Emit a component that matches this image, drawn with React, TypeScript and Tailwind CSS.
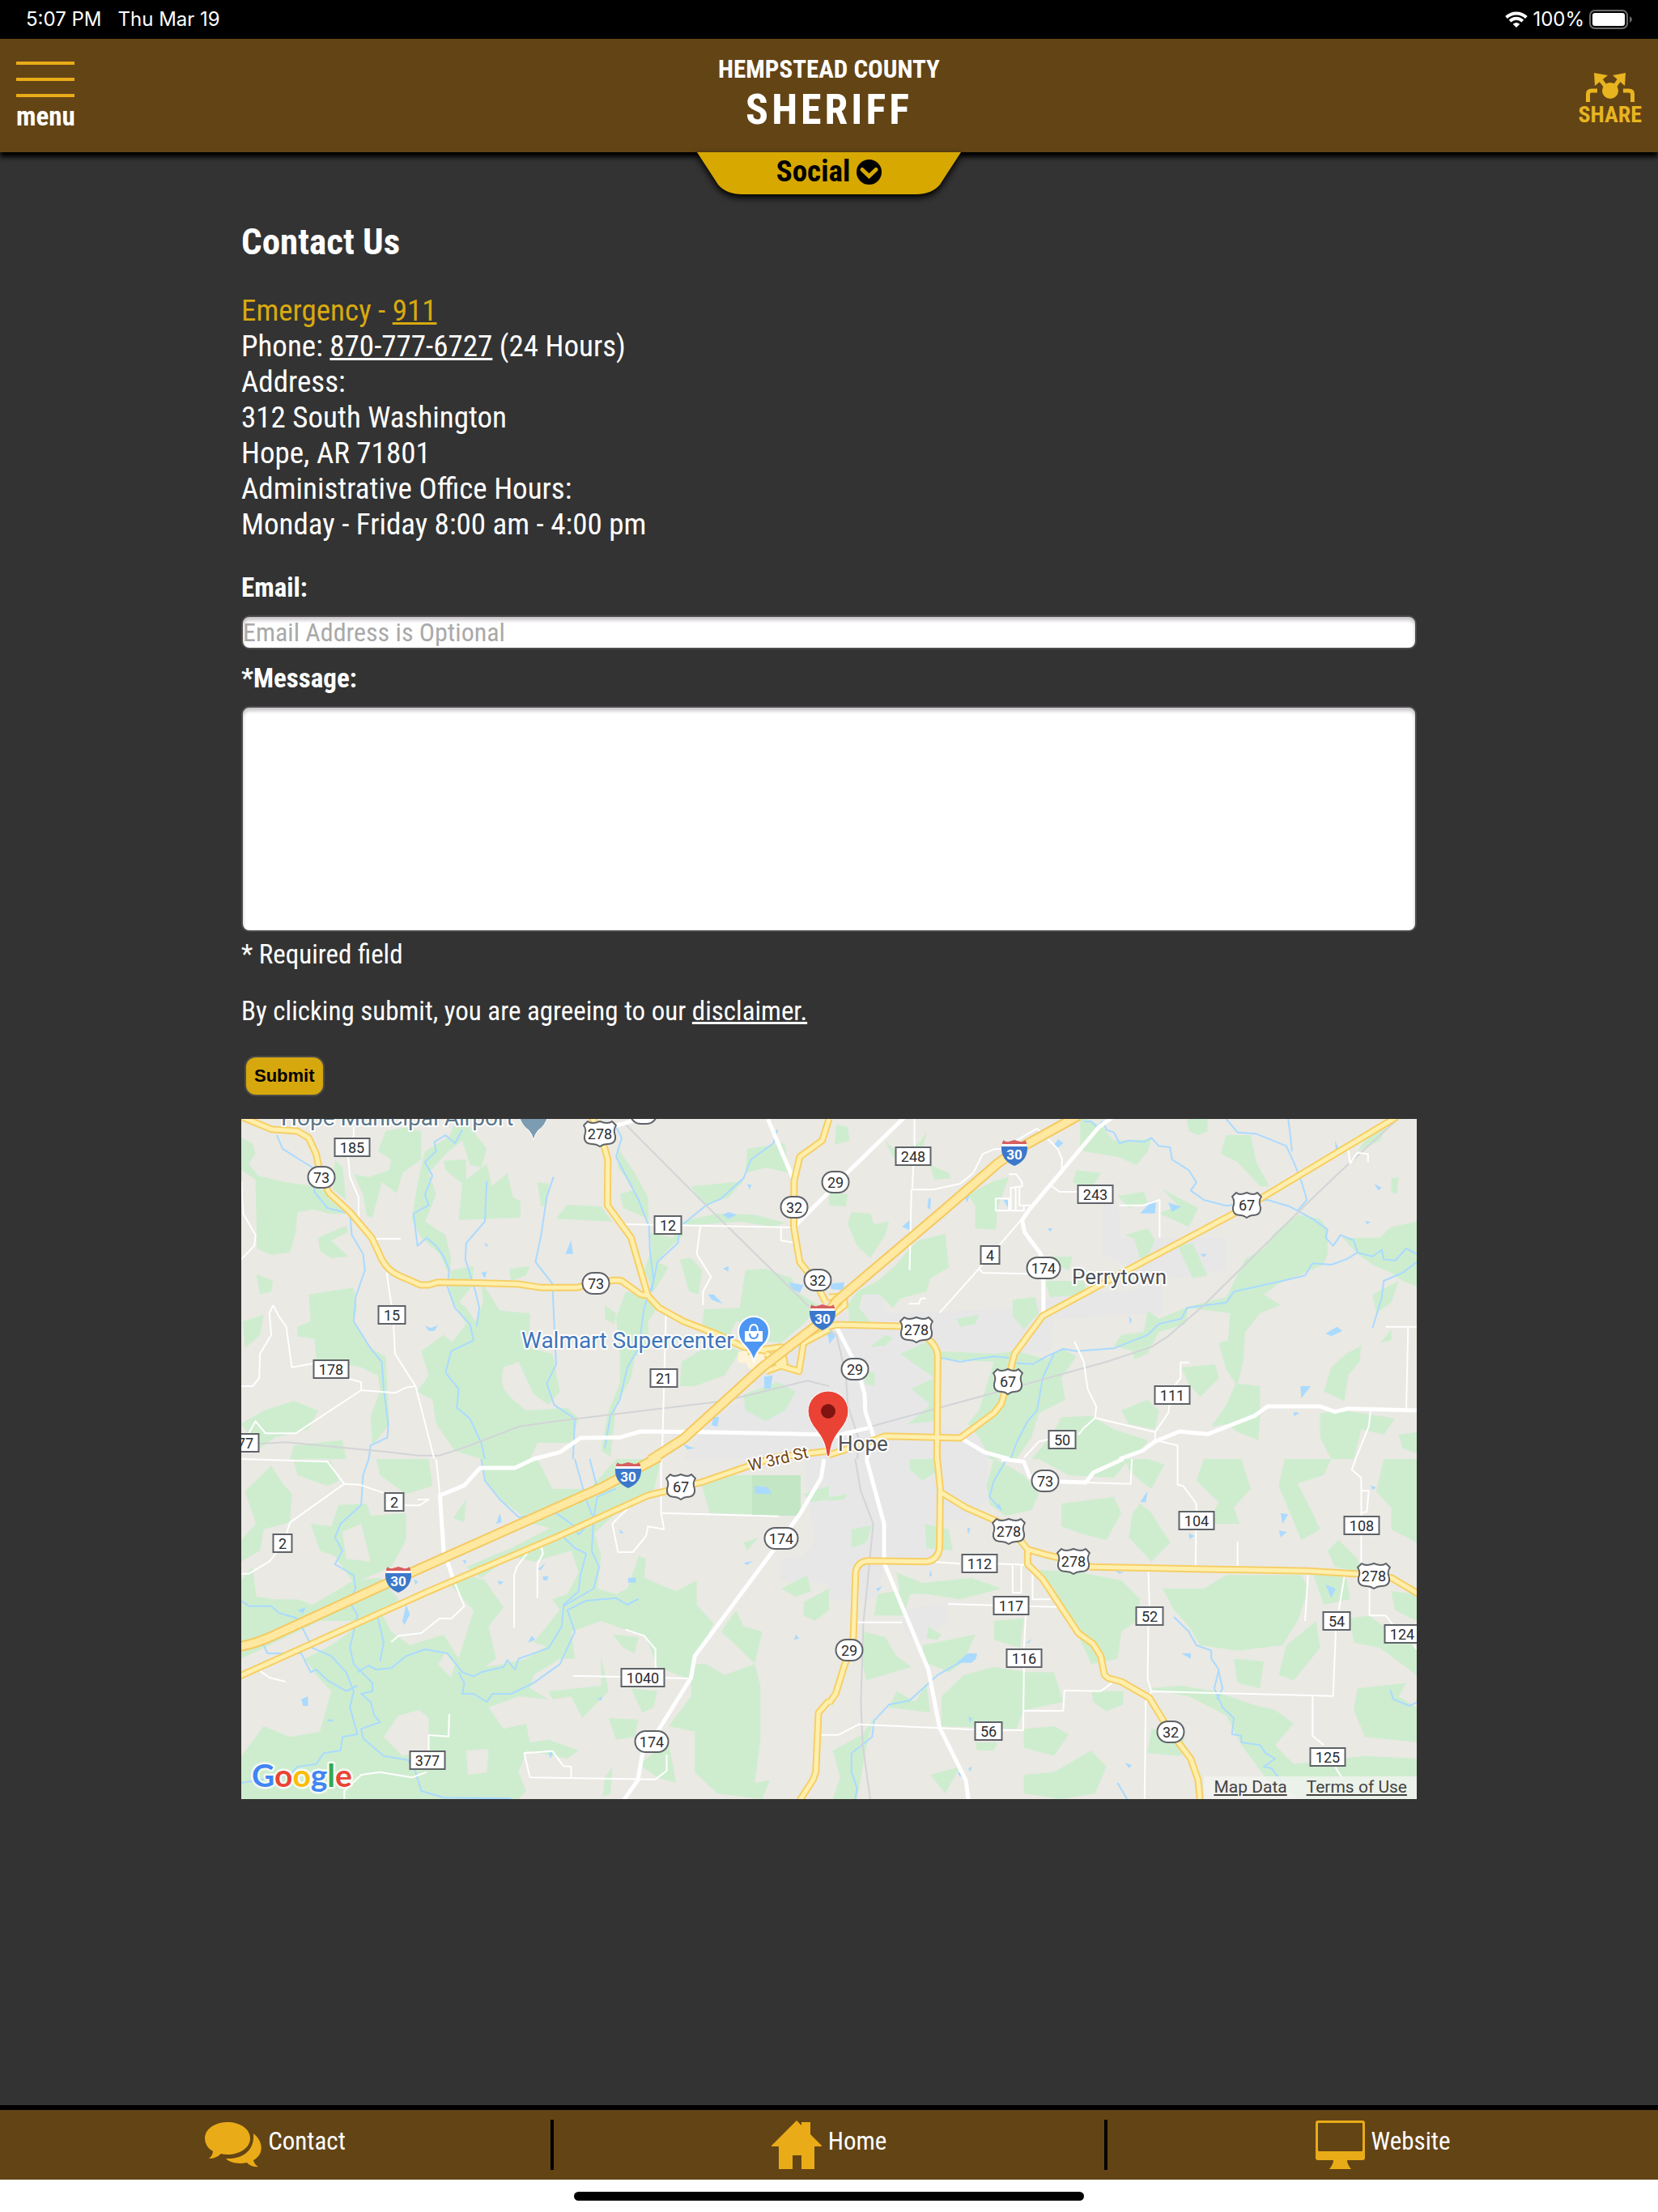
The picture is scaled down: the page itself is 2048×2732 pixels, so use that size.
/**
 * Contact screen of the county sheriff app
 */

import React, { useState } from 'react';

/* ------------------------------------------------------------------ */
/* Map data                                                            */
/* ------------------------------------------------------------------ */

interface Tile {
  transform: string;
  city: string[];
  woods: string[];
  water: string[];
  rivers: string;
  rail: string;
  lanes: string;
  streets: string;
  highways: string;
  interstate: string;
}

// The map is made of four tiles, each one drawn on a 1568 x 1260 grid
const TILES: Tile[] = [
  {
    transform: 'translate(0 0) scale(0.463 0.33333)',
    city: ['M1330 880 L1500 830 L1568 760 V1260 L1180 1260 L1250 1120 L1380 1000Z'],
    woods: [
      'M0 70 L30 90 L38 130 L20 165 L45 210 L120 235 L200 250 L250 290 L290 350 L235 352 L195 335 L150 345 L145 420 L130 495 L80 503 L42 480 L38 225 L0 190Z',
      'M365 120 L385 45 L440 30 L480 45 L480 150 L430 200 L415 275 L375 235 L350 365 L335 360 L325 280 L300 205 L340 215 L395 190 L400 150Z',
      'M575 0 L605 20 L655 110 L640 180 L610 170 L590 80 L545 130 L500 200 L520 280 L490 380 L545 430 L560 520 L555 580 L530 500 L480 440 L455 370 L470 240 L490 120 L555 65Z',
      'M540 155 L600 150 L600 225 L655 165 L668 250 L710 200 L725 290 L745 305 L745 365 L660 370 L580 375 L590 240 L545 190Z',
      'M790 235 L820 240 L815 320 L800 325Z',
      'M840 370 L870 318 L960 325 L990 380Z',
      'M1005 110 L1050 200 L1085 290 L1088 420 L1150 440 L1165 400 L1180 430 L1140 480 L1110 530 L1140 550 L1100 640 L1075 560 L1095 480 L1085 370 L1020 330 L1010 280 L1050 260 L1005 180Z',
      'M1200 250 L1340 230 L1300 290 L1235 320Z',
      'M1175 380 L1270 350 L1370 355 L1450 385 L1420 400 L1330 380 L1190 395Z',
      'M1350 110 L1450 90 L1460 200 L1400 180 L1345 200Z',
      'M180 650 L300 625 L310 700 L300 750 L345 850 L385 880 L390 1000 L395 1130 L350 1210 L345 1100 L370 1010 L365 950 L320 920 L200 890 L195 815 L150 805 L150 770 L185 750Z',
      'M550 640 L600 700 L625 750 L645 680 L640 600 L690 710 L770 720 L770 850 L830 870 L850 1010 L820 1060 L780 1020 L740 900 L700 920 L690 1000 L760 1080 L870 1070 L900 1110 L880 1200 L790 1200 L770 1260 L640 1260 L600 1120 L545 1140 L505 1020 L540 920 L560 830 L600 760Z',
      'M480 860 L540 800 L600 870 L545 950 L570 1040 L640 1190 L640 1260 L570 1230 L520 1130 L510 1040 L470 1010 L500 950Z',
      'M590 880 L680 860 L700 1000 L760 1100 L640 1180 L580 1060Z',
      'M1025 640 L1090 660 L1110 700 L1085 750 L1090 850 L1050 880 L1040 960 L1000 1060 L985 1250 L960 1230 L980 1080 L1010 980 L1010 870 L1000 740Z',
      'M1235 705 L1330 700 L1345 560 L1400 555 L1470 590 L1480 640 L1540 690 L1500 760 L1440 830 L1380 820 L1370 760 L1320 750 L1300 810 L1230 760Z',
      'M1170 990 L1175 900 L1270 820 L1330 860 L1290 950 L1210 990Z',
      'M1340 1020 L1430 975 L1480 1010 L1450 1080 L1400 1120 L1345 1080Z',
      'M40 575 L85 600 L80 640 L50 650Z',
      'M5 750 L60 725 L50 800 L10 850Z',
      'M205 440 L280 395 L285 420 L240 450 L285 510 L240 515 L210 490Z',
      'M60 1080 L140 1045 L205 1080 L180 1150 L90 1180 L50 1220 L0 1130Z',
      'M970 690 L1000 720 L995 760 L970 740Z',
      'M1170 520 L1200 515 L1230 560 L1220 650 L1195 640Z',
      'M140 1210 L270 1190 L280 1260 L130 1260Z',
      'M560 560 L620 545 L615 620 L580 680 L555 640Z',
      'M715 555 L770 545 L760 580 L720 600Z',
      'M250 150 L270 180 L280 300 L245 260Z',
    ],
    water: [
      'M1285 355 L1300 345 L1322 355 L1300 370Z',
      'M1460 605 L1500 615 L1490 645 L1470 630Z',
      'M490 765 L505 775 L525 765 L515 785 L500 785Z',
      'M865 500 L880 450 L885 500Z',
      'M1180 1205 L1210 1220 L1190 1225Z',
      'M1245 650 L1260 650 L1285 685 L1255 670Z',
      'M1395 955 L1418 950 L1412 1000 L1395 1000Z',
      'M640 570 L655 565 L650 590Z',
      'M1260 1105 L1275 1105 L1270 1140 L1255 1135Z',
      'M1285 555 L1300 545 L1300 565Z',
      'M1560 780 L1568 780 L1568 820Z',
      'M648 460 L658 465 L655 475Z',
      'M1350 240 L1362 245 L1355 262Z',
    ],
    rivers:
      'M95 60 L110 110 L155 150 L190 180 L195 270 L230 330 L290 350 L295 430 L325 500 L330 560 L305 660 L300 750 L345 850 L375 900 L380 1000 L392 1130 L390 1180 L345 1210 L340 1260 M590 40 L570 90 L545 60 L515 85 L520 120 L490 160 L510 210 L490 280 L500 320 L460 350 L470 470 L495 440 L520 470 L540 510 L555 560 L550 620 L570 700 L610 760 L620 820 L560 860 L545 940 L580 1000 L575 1070 L610 1110 L640 1200 L650 1260 M655 230 L650 380 L600 460 L598 520 L625 640 L635 700 L628 770 M833 215 L815 290 L800 430 L785 530 L830 610 L835 760 L840 910 L815 980 L835 1060 L890 1110 L885 1260 M1000 30 L1015 70 L1000 140 L1060 300 L1088 400 L1090 480 L1100 600 L1075 700 L1060 850 L1030 920 L1010 1040 L985 1100 L970 1220 M1430 40 L1420 90 L1360 150 L1340 220 L1280 295 L1240 320 L1170 400 L1165 460 L1110 530 L1095 640',
    rail: 'M1025 20 L1240 320 L1515 695 M0 1207 L120 1198 L250 1215 L400 1235 L470 1247 H530 L600 1215 L740 1140 L840 1120 L1290 1045 L1510 970 L1568 990',
    lanes:
      'M300 30 V60 L285 140 L290 215 L313 290 V380 M360 444 H425 M388 570 L395 640 L405 720 L410 870 L465 990 L515 1260 M465 990 L440 995 L410 1015 L320 1005 L145 1165 H65 L38 1120 L20 1165 M85 690 L75 720 L80 800 L50 870 L48 960 L30 990 L0 990 M85 690 L100 730 L120 770 L135 920 L195 905 M280 960 L320 975 L320 1005 M1020 390 L1475 402 M1225 397 L1215 500 L1253 585 L1232 640 V690 M1133 730 L1123 1230 M1440 402 L1440 450 L1475 458 M0 230 L5 350 L38 430 L35 470 L0 520',
    streets:
      'M780 1260 L850 1235 L905 1182 L1010 1180 L1065 1158 L1240 1160 L1568 1170 M1405 0 L1475 230 M1568 270 L1478 395 M1000 25 L1060 0',
    highways:
      'M0 -8 L80 38 L150 45 L180 70 L200 130 L212 215 L235 275 L290 345 L348 440 L375 520 Q390 560 420 580 L478 615 L500 615 L525 605 L610 607 L740 612 L800 625 L895 625 L940 608 L1000 597 L1015 600 L1065 650 L1085 655 M935 -10 L962 70 L978 150 L977 320 L1040 440 L1085 655 L1115 700 L1180 750 L1265 795 L1340 845 L1400 860 M1568 0 L1550 80 L1490 140 L1475 230 L1474 400 L1490 530 L1530 600 L1560 680 M1350 862 L1440 845 L1450 905 L1400 870 M1400 935 L1440 915 L1488 935 L1500 830 L1568 780 M1400 870 L1440 915',
    interstate: 'M1090 1265 L1180 1185 L1390 920 L1568 730',
  },
  {
    transform: 'translate(726 0) scale(0.463 0.33333)',
    city: [
      'M0 720 L160 720 L340 710 L500 700 L640 640 L780 640 L890 610 L890 720 L600 740 L590 860 L430 880 L290 850 L290 1130 L440 1190 L440 1260 L0 1260Z',
      'M730 300 L770 300 L780 440 L1060 440 L1060 560 L880 600 L730 500Z',
      'M90 650 L140 640 L150 720 L90 720Z',
    ],
    woods: [
      'M20 20 L50 30 L55 80 L15 95Z',
      'M0 270 L50 280 L45 325 L0 320Z',
      'M60 345 L110 350 L120 390 L160 380 L150 430 L110 515 L75 470 L50 390Z',
      'M240 450 L310 425 L320 550 L270 590 L260 640 L190 665 L170 700 L135 650 L90 650 L80 700 L110 750 L55 760 L50 690 L75 640 L130 600 L180 540 L215 480Z',
      'M370 280 L440 230 L480 215 L450 330 L445 410 L390 405 L390 320Z',
      'M270 170 L320 200 L325 220 L280 225Z',
      'M150 80 L180 120 L240 90 L260 50 L250 110 L200 150 L170 140Z',
      'M670 0 L690 0 L730 30 L760 80 L860 75 L850 120 L820 170 L770 140 L680 120 L670 100Z',
      'M660 190 L725 200 L700 260 L650 235Z',
      'M770 285 L840 270 L850 310 L800 330Z',
      'M890 260 L985 330 L960 400 L880 350 L930 320Z',
      'M790 430 L850 405 L870 450 L850 510 L830 520 L815 445Z',
      'M930 470 L970 460 L1010 580 L970 590Z',
      'M955 0 L1010 0 L1010 45 L985 60 L960 45Z',
      'M1060 60 L1125 60 L1140 160 L1175 250 L1150 250 L1090 160 L1045 130Z',
      'M1440 60 L1490 20 L1470 80 L1410 120Z',
      'M1110 520 L1160 480 L1190 420 L1250 355 L1310 370 L1330 410 L1330 500 L1320 540 L1200 610 L1160 650 L1205 690 L1150 720 L1110 790 L1105 900 L1090 980 L1150 990 L1150 1100 L1145 1190 L1090 1160 L1060 1130 L1020 1140 L1060 1060 L1085 980 L1060 930 L1040 830 L1065 820 L1070 720 L960 700 L950 760 L880 790 L850 870 L815 890 L810 860 L760 840 L780 800 L840 790 L850 710 L880 740 L960 695 L1060 660Z',
      'M1370 440 L1470 440 L1500 400 L1568 380 L1568 620 L1530 600 L1500 570 L1450 540 L1410 500Z',
      'M1450 650 L1520 600 L1500 680 L1460 720Z',
      'M1380 870 L1420 840 L1415 900 L1385 950 L1375 1045 L1320 1010 L1340 920Z',
      'M1310 1090 L1370 1080 L1420 1090 L1510 1110 L1480 1170 L1420 1150 L1400 1260 L1340 1260 L1310 1180Z',
      'M490 670 L550 660 L560 720 L520 780 L490 730Z',
      'M590 510 L650 510 L640 560 L590 530Z',
      'M575 600 L680 600 L690 650 L590 660Z',
      'M340 740 L400 725 L390 760 L350 770Z',
      'M190 870 L270 820 L290 860 L440 870 L500 860 L580 890 L620 850 L660 880 L620 960 L630 1040 L560 1090 L540 1180 L500 1260 L430 1260 L400 1180 L370 1130 L400 1080 L440 900 L300 890 L290 1120 L210 1130 L270 1060 L220 1000 L280 960Z',
      'M620 1105 L700 1100 L760 1150 L850 1190 L830 1240 L770 1260 L540 1260 L590 1180Z',
      'M780 1080 L850 1040 L880 1080 L870 1150 L800 1130Z',
      'M940 920 L1030 910 L1040 960 L990 1030 L960 980Z',
      'M1470 830 L1500 780 L1500 820Z',
      'M1500 220 L1520 215 L1515 280 L1500 270Z',
      'M95 935 L122 940 L122 990 L95 980Z',
      'M110 845 L150 800 L170 810 L150 840Z',
      'M1520 1170 L1568 1160 V1240 L1530 1220Z',
    ],
    water: [
      'M830 350 L860 305 L872 310 L870 350Z',
      'M905 310 L940 325 L915 345Z',
      'M195 400 L215 375 L215 412Z',
      'M600 95 L612 75 L625 90 L610 108Z',
      'M5 610 L40 605 L40 635 L5 630Z',
      'M1325 795 L1355 770 L1370 785 L1340 805Z',
      'M1258 990 L1285 990 L1260 1035Z',
      'M360 280 L375 285 L368 310Z',
      'M265 295 L272 295 L270 335 L263 330Z',
      'M990 500 L1008 500 L1000 512Z',
      'M1455 240 L1475 255 L1465 265Z',
      'M1240 1085 L1255 1090 L1240 1102Z',
      'M0 780 L18 805 L0 835Z',
      'M800 730 L808 745 L803 760Z',
      'M583 405 L597 405 L590 418Z',
      'M465 300 L480 300 L478 330Z',
      'M1350 80 L1360 110 L1352 115Z',
      'M1430 378 L1445 382 L1435 390Z',
    ],
    rivers:
      'M680 10 L700 10 L715 30 L730 10 L740 40 L760 50 L775 90 L800 80 L840 85 L860 70 L880 100 L910 105 L915 150 L960 190 L980 235 L965 265 L1000 300 L1060 322 L1170 300 L1230 325 L1290 370 L1330 410 L1325 440 L1345 470 L1365 430 L1400 450 L1410 495 L1450 510 L1475 485 L1480 520 L1510 525 L1540 480 L1568 500 M1410 495 L1380 520 L1340 540 L1290 535 L1270 580 L1210 600 L1080 640 L1060 680 L955 700 L940 740 L880 760 L850 800 L760 850 L660 860 L625 852 L580 880 L545 908 L500 905 M480 885 L440 880 L390 890 L350 900 L300 885 M600 870 L570 960 L555 1080 L530 1120 L500 1200 L485 1260 M1060 0 L1090 50 L1140 55 L1220 100 L1240 160 L1260 230 L1275 300 L1250 340 M1225 0 L1230 50 L1235 120 M1568 530 L1530 570 L1480 600 L1475 660 L1450 775',
    rail: 'M1510 10 L1360 200 L1270 320 L1000 690 L905 805 L860 845 L740 900 L480 1000 L110 1140 L40 1165 M0 780 L20 800 L45 950 L50 1060 L80 1190 L75 1260',
    lanes:
      'M228 0 V100 L222 262 H278 L350 240 L385 200 L410 130 L440 112 H470 M500 80 L555 35 L610 110 L622 150 L620 200 L590 245 L615 270 H665 M220 262 L215 560 M515 370 L400 555 L295 718 M400 555 L410 570 L575 575 M655 825 L680 900 L690 1000 L713 1065 L710 1108 L870 1160 L905 1090 L912 1030 M915 1000 L938 960 V902 H960 M870 1160 V1190 L930 1210 V1260 M710 1108 L680 1145 L665 1170 M585 1188 L560 1195 L520 1255 M775 320 H840 L882 300 V440 M1385 110 L1390 165 L1410 125 L1438 130 V160 M1485 770 H1568 M1545 775 L1540 1075 M1445 1080 L1440 1140 L1405 1260 M445 295 H480 V340 H445Z M480 205 H500 L515 235 V250 L485 255 V340 H520 V320 M498 255 V340 M508 255 V320 H540 M213 685 H240 L245 665 H258',
    streets:
      'M200 -5 L0 265 M755 -5 L720 30 L535 335 L515 375 L522 420 L565 500 L572 550 L572 720 M20 770 L75 920 L95 1020 L97 1085 L120 1180 M0 1180 L105 1145 M100 1260 L120 1180 M355 1185 L415 1235 L480 1260 M775 1260 L835 1230 L870 1195 L935 1158 L1010 1168 L1135 1100 L1170 1065 H1310 L1350 1085 L1385 1073 L1568 1080',
    highways:
      'M1515 -8 L1115 325 L790 565 L570 730 L495 870 L477 970 L460 1055 L440 1090 L350 1182 L150 1175 L100 1200 L0 1245 M0 770 L20 762 L190 768 L235 785 Q290 830 290 880 L288 1265 M0 660 L40 658 L42 690 L10 725',
    interstate: 'M665 -12 L500 115 L450 165 L300 345 L20 675 L-10 735',
  },
  {
    transform: 'translate(0 420) scale(0.463 0.33333)',
    city: ['M1500 0 H1568 V460 L1440 450 V370 L1500 360 L1530 300Z'],
    woods: [
      'M0 300 L40 240 L10 120 L80 25 L110 90 L135 130 L130 235 L60 260 L50 340 L0 380Z',
      'M260 170 L335 165 L345 210 L440 200 L440 300 L400 400 L300 460 L250 360 L210 340 L185 240 L240 250Z M270 270 L320 240 L345 380 L280 370Z',
      'M0 450 L30 400 L40 510 L90 520 L150 520 L190 540 L300 450 L370 440 L420 520 L350 600 L210 600 L150 640 L60 700 L0 740Z',
      'M360 0 L500 0 L510 100 L440 130 L400 90 L370 60Z',
      'M640 0 L790 0 L830 110 L930 110 L1000 0 L1120 0 L1100 120 L1000 200 L900 330 L870 340 L860 270 L780 240 L700 160 L650 80Z',
      'M640 440 L600 400 L720 330 L860 230 L940 260 L960 360 L950 480 L1000 500 L1030 480 L1060 360 L1080 370 L1075 440 L1160 490 L1215 450 L1215 540 L1260 610 L1210 740 L1200 820 L1110 770 L1080 660 L960 600 L880 640 L830 700 L780 680 L860 540 L850 560 L830 520 L870 500 L900 420 L880 340 L780 380 L720 360Z',
      'M590 420 L650 450 L700 550 L660 620 L680 740 L640 780 L580 740 L620 560 L560 470Z',
      'M170 740 L240 690 L290 640 L370 560 L400 640 L450 690 L540 650 L580 740 L650 770 L700 760 L760 740 L830 680 L880 640 L890 740 L850 740 L780 800 L770 850 L820 890 L740 880 L660 920 L700 1000 L760 980 L770 1050 L820 1040 L900 1080 L870 1110 L760 1080 L740 1160 L760 1230 L740 1260 L0 1260 L0 1100 L60 990 L130 1030 L210 1010 L240 860 L200 800Z M380 1030 L420 950 L475 930 L500 960 L500 1080 L430 1100Z M600 1080 L660 1075 L655 1160 L605 1170Z M525 760 L545 720 L570 760 L560 810Z',
      'M1200 760 L1240 760 L1290 800 L1370 760 L1385 840 L1385 1040 L1370 1200 L1410 1190 L1390 1260 L1270 1240 L1210 1160 L1210 1010 L1140 990 L1200 880Z',
      'M1225 80 L1300 60 L1490 60 L1490 210 L1250 200Z',
      'M1040 850 L1110 860 L1100 920 L1070 940Z',
      'M980 960 L1060 965 L1050 1030 L1000 1040Z',
      'M1440 480 L1510 430 L1520 490 L1480 510Z',
      'M1500 530 L1568 480 L1568 560 L1530 600 L1500 580Z',
      'M820 860 L960 840 L960 730 L980 860 L910 960 L880 880 L830 890Z',
      'M1280 640 L1320 560 L1340 620 L1390 640 L1370 760 L1320 690Z',
      'M1060 1130 L1140 1050 L1160 1200 L1110 1180Z',
      'M565 220 L600 150 L595 235Z',
      'M140 0 L240 10 L260 80 L230 100 L150 60Z',
      'M1500 130 L1568 100 L1568 150 L1520 160Z',
      'M990 650 L1060 660 L1050 720 L1020 700Z',
      'M1340 310 L1380 290 L1350 340Z',
      'M970 1180 L990 1140 L985 1240 L965 1250Z',
    ],
    water: [
      'M430 600 L440 540 L450 575 L435 615Z',
      'M680 240 L690 200 L695 235Z',
      'M1370 100 L1405 105 L1415 130 L1370 128Z',
      'M1032 440 H1053 V458 H1032Z',
      'M160 890 L178 880 L178 915 L165 915Z',
      'M150 560 L172 550 L165 572Z',
      'M790 410 L812 385 L800 410Z',
      'M805 435 L820 435 L815 450 L805 448Z',
      'M1340 385 L1365 378 L1350 392Z',
      'M1475 670 L1480 650 L1488 665Z',
      'M685 450 L700 455 L688 467Z',
      'M460 445 L472 455 L465 465Z',
      'M230 965 H246 V972 H230Z',
      'M765 680 L775 655 L785 670Z',
      'M590 375 L600 375 L598 390Z',
      'M820 1090 L832 1085 L825 1110Z',
      'M950 890 L965 880 L960 895Z',
      'M1010 260 L1020 275 L1010 275Z',
    ],
    rivers:
      'M340 0 L325 60 L320 170 L265 240 L250 290 L270 340 L250 390 L300 430 L305 480 L290 530 L310 580 L290 700 L300 760 L350 830 L350 860 L320 870 L345 900 L355 950 L370 975 L320 1000 L325 1035 L380 1100 L445 1115 L465 1160 L480 1230 L540 1255 L720 1258 M0 525 L20 545 L80 545 L100 570 L150 590 L190 700 L240 730 L280 790 L300 860 L290 920 L310 1020 L270 1030 L265 1080 L220 1090 L200 1130 L150 1140 L130 1170 L0 1200 M60 690 L70 720 L160 720 L185 790 L200 780 L230 820 L280 860 L310 840 M365 590 L380 680 L370 750 M310 790 L340 765 L360 780 L400 775 L440 730 L490 705 L550 720 L590 790 L620 805 L640 790 L700 770 L710 745 L730 780 L740 740 L820 700 L855 620 L860 540 L900 490 L905 430 L920 350 L890 330 L860 290 M580 790 L595 830 L590 870 L620 870 L655 900 L670 870 L720 870 L780 830 L850 760 L890 640 L870 560 L920 525 L1000 515 L1030 540 L1060 518 M640 0 L650 80 L690 150 L740 215 L840 200 L890 250 L900 280 L940 220 L950 140 L1000 110 M930 0 L950 110 M890 0 L920 150 L940 220 L935 340 L955 400 L940 480 L860 545',
    rail: '',
    lanes:
      'M0 0 L230 10 L275 92 L130 235 L120 280 M275 92 L315 95 L400 135 M530 135 L520 0 M95 345 L75 380 L20 425 H0 M435 172 H475 L500 150 L470 150 M567 450 L595 545 L560 592 L530 590 L480 645 L420 655 L400 678 M800 320 L805 350 L790 390 V515 M765 345 L735 400 L728 430 V625 M1120 0 V200 L1435 212 M1120 200 L1128 260 L1085 250 L1080 285 L1045 345 H1005 L990 240 L1030 185 M885 803 L1195 813 M1105 775 V705 L1075 655 L1025 632 M500 1080 V1023 L553 1028 L555 945 M275 1260 V1230 L320 1170 L370 1160 L455 1180 L495 1160 M770 1180 L1105 1187 L1135 1155 V1095 M770 1180 L755 1090 L830 1082 L860 1138 L880 1140 V1180 M1533 1022 H1568 M50 785 L75 810 L118 825',
    streets:
      'M780 0 L730 33 H637 L595 98 L530 135 L540 340 L567 450 M1555 0 L1547 70 L1490 205 L1440 300 L1210 730 L1200 810 L1115 1000 L1070 1095 L1058 1190 L1020 1265',
    highways:
      'M-5 805 L500 490 L840 290 L1085 135 L1130 120 L1230 85 L1345 30 L1420 -5 L1568 -30 M1568 895 L1540 940 L1533 1160 L1525 1190 L1490 1265',
    interstate: 'M-5 695 Q40 685 100 645 L390 460 L640 305 L970 100 L1115 -8',
  },
  {
    transform: 'translate(726 420) scale(0.463 0.33333)',
    city: [
      'M0 0 H420 L430 140 L360 230 L300 220 V370 L150 380 L130 520 H0Z',
      'M200 560 L315 530 V600 L240 680 L200 640Z',
    ],
    woods: [
      'M215 0 L280 0 L285 50 L250 80 L215 40Z',
      'M440 0 L470 20 L520 60 L560 130 L540 190 L470 210 L430 170 L420 100Z',
      'M560 0 L800 0 L760 70 L640 60Z',
      'M620 165 L760 140 L780 200 L740 300 L680 280 L620 250Z',
      'M790 0 L850 0 L895 20 L860 110 L830 80 L800 40Z',
      'M830 165 L860 200 L910 310 L860 380 L800 290 L810 200Z',
      'M1000 0 L1100 0 L1125 110 L1080 180 L1095 240 L1010 240 L1040 160 L980 80Z',
      'M1215 0 L1340 0 L1320 60 L1250 90 L1290 200 L1310 260 L1260 300 L1200 100Z',
      'M1480 0 H1568 V310 L1500 260 L1500 180 L1460 120Z',
      'M1360 300 L1410 370 L1420 420 L1350 400 L1330 340Z',
      'M560 410 L670 420 L780 450 L830 520 L820 600 L780 640 L770 740 L700 760 L660 640 L600 480Z',
      'M890 480 L1000 480 L1060 430 L1260 430 L1280 480 L1250 600 L1210 690 L1090 710 L990 690 L960 620 L920 560Z',
      'M1290 420 L1380 440 L1390 520 L1320 540Z',
      'M1220 690 L1300 600 L1310 700 L1240 820 L1200 800Z',
      'M1500 490 L1568 500 V600 L1510 560Z',
      'M1390 590 L1440 580 L1500 640 L1568 700 V800 L1470 700 L1400 680Z',
      'M250 690 L390 650 L360 750 L320 790 L250 750Z',
      'M95 640 L150 660 L180 730 L220 770 L100 820 L85 740Z',
      'M300 880 L360 800 L440 770 L530 790 L600 790 L625 900 L520 930 L500 1000 L300 990Z',
      'M180 860 L230 900 L260 830 L270 940 L160 920Z',
      'M10 1080 L90 1020 L120 960 L100 1060 L75 1260 L10 1260 L30 1180Z',
      'M520 1000 L600 990 L640 1020 L600 1100 L520 1070Z',
      'M520 1170 L600 1160 L700 1080 L740 1140 L710 1240 L620 1260 L520 1240Z',
      'M850 850 L940 840 L1030 860 L1130 910 L1190 930 L1240 980 L1190 1060 L1240 1130 L1430 1100 L1568 1110 V1260 L1260 1260 L1170 1190 L1100 1060 L1060 950 L960 880Z',
      'M1410 850 L1540 830 L1520 880 L1568 920 V1050 L1430 1030 L1400 930Z',
      'M860 1000 L950 1020 L940 1100 L850 1090Z',
      'M180 420 L250 460 L380 440 L460 480 L350 520 L260 500 L190 500Z',
      'M440 600 L520 590 L510 700 L440 670Z',
      'M700 860 H785 V910 L740 935 L705 900Z',
      'M1080 740 L1160 750 L1150 850 L1090 830Z',
      'M255 240 L320 260 L330 340 L260 330Z',
      'M130 500 L220 480 L200 580 L120 580Z',
      'M390 1050 L450 1050 L440 1080 L395 1080Z',
      'M270 1170 L350 1140 L310 1240Z',
      'M0 140 L50 130 L40 150 L0 155Z',
      'M60 260 L115 245 L100 310 L60 330Z',
      'M265 620 L300 650 L290 670 L260 665Z',
    ],
    water: [
      'M340 755 L370 720 L395 720 L392 740 L380 755Z',
      'M445 180 L455 165 L460 185Z',
      'M830 160 L850 118 L845 160Z',
      'M1325 465 L1352 480 L1340 515Z',
      'M1205 200 L1225 205 L1210 240Z',
      'M940 720 L965 720 L965 740Z',
      'M790 1125 L808 1135 L800 1145Z',
      'M1200 265 L1222 270 L1205 290Z',
      'M525 685 L540 665 L535 680Z',
      'M960 275 L975 285 L962 297Z',
      'M1445 98 L1460 105 L1450 115Z',
      'M760 410 L785 420 L775 425Z',
      'M370 255 L376 255 L374 275 L369 270Z',
      'M270 410 L275 430 L268 438Z',
      'M125 480 L142 472 L132 490Z',
      'M372 955 L382 960 L376 980Z',
      'M372 1145 L382 1140 L376 1160Z',
      'M342 1160 L355 1165 L350 1180Z',
    ],
    rivers:
      'M470 10 L440 80 L428 140 L460 190 M380 730 L290 800 L215 895 L160 910 L120 970 L115 1030 L60 1090 L60 1160 L75 1220 L70 1260 M920 585 L960 640 L980 690 L1020 710 L1020 740 L1040 780 L1028 850 L1050 920 L1080 960 L1075 1020 L1100 1025 L1100 1050 L1150 1060 L1165 1090 L1190 1110 L1160 1140 L1180 1145 L1210 1200 M1498 855 L1505 890 L1550 915 L1568 900 M1040 790 L1050 850 L1035 890 M770 1200 L795 1260',
    rail: 'M70 0 L85 120 L118 240 L100 500 L92 600 L85 900 L90 1060 L110 1260',
    lanes:
      'M685 87 L805 92 L808 0 M930 0 V95 L945 100 L980 165 L978 395 M1090 307 V400 M1405 0 L1395 40 L1420 70 V400 M1420 118 H1440 L1435 195 L1420 200 M285 382 L350 388 M445 388 L530 392 M490 392 V495 H513 V392 M318 537 L440 542 M530 545 L610 548 M543 400 V520 H590 M525 580 L520 700 M520 775 L518 1005 H460 M0 1022 H25 L80 983 L390 1003 M520 933 H625 L628 857 L725 860 L755 830 M852 415 L855 545 M852 615 L850 815 L860 862 H885 L1345 878 L1352 635 M1360 560 L1375 435 M1278 430 L1270 600 M1290 878 V1025 L1320 1060 M1350 1140 L1370 1185 M860 862 L845 900 L842 1260 M1442 480 V580 H1485 L1505 615 M1560 690 L1568 705 M75 605 H195',
    streets:
      'M100 0 L147 240 V385 L265 780 L295 995 L365 1190 L372 1265 M460 0 L520 10 L535 65 L575 82 L685 87 L705 50 L785 0',
    highways:
      'M288 -10 L297 110 L295 330 Q290 375 260 380 L105 377 Q75 380 71 420 L65 660 L55 710 L40 770 L18 870 L0 905 M300 125 L365 180 L480 250 L530 335 L580 355 L652 378 L700 400 L1280 415 L1455 430 L1500 440 L1573 500 M530 335 V390 L570 445 L665 645 L705 685 L725 730 L735 800 L745 812 L780 825 L855 885 L910 1010 L965 1110 L985 1190 L990 1265',
    interstate: '',
  },
];

interface Sign {
  label: string;
  x: number;
  y: number;
}

const COUNTY_SIGNS: Sign[] = [
  { label: '185', x: 137, y: 35 },
  { label: '15', x: 186, y: 242 },
  { label: '178', x: 111, y: 309 },
  { label: '12', x: 527, y: 131 },
  { label: '21', x: 522, y: 320 },
  { label: '77', x: 5, y: 400 },
  { label: '248', x: 830, y: 46 },
  { label: '243', x: 1055, y: 93 },
  { label: '4', x: 925, y: 168 },
  { label: '111', x: 1150, y: 341 },
  { label: '50', x: 1014, y: 396 },
  { label: '2', x: 189, y: 473 },
  { label: '2', x: 51, y: 524 },
  { label: '1040', x: 496, y: 690 },
  { label: '377', x: 230, y: 792 },
  { label: '104', x: 1180, y: 496 },
  { label: '108', x: 1384, y: 502 },
  { label: '112', x: 912, y: 549 },
  { label: '117', x: 951, y: 601 },
  { label: '52', x: 1122, y: 614 },
  { label: '54', x: 1353, y: 620 },
  { label: '116', x: 967, y: 666 },
  { label: '124', x: 1434, y: 636 },
  { label: '56', x: 923, y: 756 },
  { label: '125', x: 1342, y: 788 },
];

const STATE_SIGNS: Sign[] = [
  { label: '73', x: 99, y: 72 },
  { label: '73', x: 438, y: 203 },
  { label: '32', x: 683, y: 109 },
  { label: '32', x: 712, y: 199 },
  { label: '29', x: 734, y: 78 },
  { label: '174', x: 991, y: 184 },
  { label: '29', x: 758, y: 309 },
  { label: '174', x: 667, y: 518 },
  { label: '174', x: 507, y: 769 },
  { label: '73', x: 993, y: 447 },
  { label: '29', x: 751, y: 656 },
  { label: '32', x: 1148, y: 757 },
  { label: '', x: 497, y: -7 },
];

const US_SIGNS: Sign[] = [
  { label: '278', x: 443, y: 18 },
  { label: '67', x: 1242, y: 106 },
  { label: '278', x: 834, y: 260 },
  { label: '67', x: 947, y: 324 },
  { label: '67', x: 543, y: 454 },
  { label: '278', x: 948, y: 509 },
  { label: '278', x: 1028, y: 546 },
  { label: '278', x: 1399, y: 564 },
];

const INTERSTATE_SIGNS: Sign[] = [
  { label: '30', x: 718, y: 245 },
  { label: '30', x: 955, y: 42 },
  { label: '30', x: 478, y: 440 },
  { label: '30', x: 194, y: 569 },
];

/* ------------------------------------------------------------------ */
/* Map                                                                 */
/* ------------------------------------------------------------------ */

interface RoadLayerProps {
  kind: 'rivers' | 'rail' | 'lanes' | 'streets' | 'highways' | 'interstate';
  color: string;
  width: number;
}

const RoadLayer: React.FC<RoadLayerProps> = ({ kind, color, width }) => (
  <g fill="none" stroke={color} strokeWidth={width} strokeLinejoin="round">
    {TILES.map((tile) => (
      <path key={tile.transform} d={tile[kind]} transform={tile.transform} vectorEffect="non-scaling-stroke" />
    ))}
  </g>
);

const SignText: React.FC<Sign> = ({ label, x, y }) => (
  <text x={x} y={y + 7} textAnchor="middle" fontSize="18" fill="#2b2d30">
    {label}
  </text>
);

const AreaMap: React.FC = () => (
  <svg viewBox="0 0 1452 840" className="block w-full font-['Roboto',sans-serif]" role="img" aria-label="Map of Hope, Arkansas">
    <rect width="1452" height="840" fill="#eae9e4" />
    {TILES.map((tile) => (
      <g key={tile.transform} transform={tile.transform}>
        {tile.city.map((d) => <path key={d} d={d} fill="#e7e7e8" />)}
        {tile.woods.map((d) => <path key={d} d={d} fill="#ceedcf" fillRule="evenodd" />)}
      </g>
    ))}
    {/* Country club next to US 67 */}
    <rect x="631" y="440" width="60" height="50" fill="#c3e6c5" />
    {/* Shopping area */}
    <path d="M614 288 L640 282 L652 290 L640 310 L626 308 L624 302 L613 300Z" fill="#fdf3d8" />
    {TILES.map((tile) => (
      <g key={tile.transform} transform={tile.transform}>
        {tile.water.map((d) => <path key={d} d={d} fill="#aadaff" />)}
      </g>
    ))}

    <RoadLayer kind="rivers" color="#aadaff" width={2} />
    <RoadLayer kind="rail" color="#d2d4d7" width={2} />
    <RoadLayer kind="lanes" color="#ffffff" width={2} />
    <RoadLayer kind="streets" color="#ffffff" width={5} />
    <RoadLayer kind="highways" color="#f6cf65" width={9} />
    <RoadLayer kind="highways" color="#ffefad" width={5} />
    <RoadLayer kind="interstate" color="#f4c95f" width={13} />
    <RoadLayer kind="interstate" color="#ffe8a0" width={9} />

    {COUNTY_SIGNS.map((sign) => {
      const w = 13 + sign.label.length * 10;
      return (
        <g key={`${sign.label}-${sign.x}`}>
          <rect x={sign.x - w / 2} y={sign.y - 11} width={w} height="22" fill="#fff" stroke="#5f6368" strokeWidth="2" />
          <SignText {...sign} />
        </g>
      );
    })}
    {STATE_SIGNS.map((sign) => {
      const w = sign.label.length === 3 ? 41 : 33;
      return (
        <g key={`${sign.label}-${sign.x}`}>
          <rect x={sign.x - w / 2} y={sign.y - 13} width={w} height="26" rx="13" fill="#fff" stroke="#5f6368" strokeWidth="2" />
          <SignText {...sign} />
        </g>
      );
    })}
    {US_SIGNS.map((sign) => {
      const s = sign.label.length === 3 ? 20 : 18;
      return (
        <g key={`${sign.label}-${sign.x}`}>
          <path
            transform={`translate(${sign.x} ${sign.y})`}
            d={`M${-s + 5} -15 Q${-s / 2} -11 0 -15 Q${s / 2} -11 ${s - 5} -15 L${s} -10 Q${s - 4} -5 ${s - 1} 3 Q${s} 13 ${s - 11} 13 Q4 13 0 16 Q-4 13 ${11 - s} 13 Q${-s} 13 ${1 - s} 3 Q${4 - s} -5 ${-s} -10Z`}
            fill="#fff"
            stroke="#5f6368"
            strokeWidth="2"
            strokeLinejoin="round"
          />
          <SignText {...sign} />
        </g>
      );
    })}
    {INTERSTATE_SIGNS.map((sign) => (
      <g key={`${sign.label}-${sign.x}`} transform={`translate(${sign.x} ${sign.y})`}>
        <path d="M-15 -10 L-15 -13 Q-13 -15 -14 -16 Q-10 -13 -7 -14 L0 -16 L7 -14 Q10 -13 14 -16 Q13 -15 15 -13 L15 -10Z" fill="#d65f5f" />
        <path d="M-15 -11 H15 V-8 H-15Z" fill="#fff" />
        <path d="M-16 -8 H16 Q17 9 0 16 Q-17 9 -16 -8Z" fill="#3b78cb" />
        <text y="8" textAnchor="middle" fontSize="17" fontWeight="700" fill="#fff">{sign.label}</text>
      </g>
    ))}

    {/* Place names, with a light halo */}
    <g fontSize="26" stroke="#fff" strokeWidth="4" strokeLinejoin="round" paintOrder="stroke">
      <text x="49" y="8" fontSize="28" fill="#5b7687">Hope Municipal Airport</text>
      <text x="346" y="283" fontSize="28" fill="#4075bb">Walmart Supercenter</text>
      <text x="1026" y="204" fill="#4e5258">Perrytown</text>
      <text x="737" y="410" fill="#4e5258">Hope</text>
      <text transform="translate(628 435) rotate(-13)" fontSize="20" fill="#73420e">W 3rd St</text>
    </g>

    {/* Airport pin */}
    <path d="M343 -4 H379 Q376 8 367 14 Q363 18 361 26 Q359 18 355 14 Q346 8 343 -4Z" fill="#7b9cb1" stroke="#fff" />
    {/* Store pin */}
    <path d="M633 299 Q630 288 621 279 Q614 272 614 263 A19 19 0 0 1 652 263 Q652 272 645 279 Q636 288 633 299Z" fill="#4e96f3" stroke="#fff" strokeWidth="2" />
    <path d="M622 262 H644 V275 H622Z" fill="#fff" />
    <path d="M628 262 Q628 254 633 254 Q638 254 638 262" fill="none" stroke="#fff" strokeWidth="2" />
    <path d="M628 265 Q628 271 633 271 Q638 271 638 265" fill="none" stroke="#4e96f3" strokeWidth="2" />
    {/* Office pin */}
    <path d="M725 417 Q723 417 722 408 Q720 396 711 385 Q700 372 700 361 A25 25 0 0 1 750 361 Q750 372 739 385 Q730 396 728 408 Q727 417 725 417Z" fill="#ea4335" stroke="#fff" strokeWidth="1" />
    <circle cx="725" cy="361" r="9" fill="#811411" />

    <text x="13" y="825" className="font-['Lato',sans-serif]" fontSize="39" fontWeight="700" stroke="#fff" strokeOpacity="0.8" strokeWidth="5" strokeLinejoin="round" paintOrder="stroke">
      <tspan fill="#4285f4">G</tspan>
      <tspan fill="#ea4335">o</tspan>
      <tspan fill="#fbbc05">o</tspan>
      <tspan fill="#4285f4">g</tspan>
      <tspan fill="#34a853">l</tspan>
      <tspan fill="#ea4335">e</tspan>
    </text>
  </svg>
);

/* ------------------------------------------------------------------ */
/* Icons                                                               */
/* ------------------------------------------------------------------ */

const WifiIcon: React.FC = () => (
  <svg width="28" height="20" viewBox="0 0 28 20" fill="none" stroke="#fff" strokeWidth="4" aria-hidden="true">
    <path d="M1.6 7.5 A17.6 17.6 0 0 1 26.4 7.5" />
    <path d="M6.2 12.1 A11 11 0 0 1 21.8 12.1" />
    <path d="M14 20 L9.7 15.8 Q14 12 18.3 15.8Z" fill="#fff" stroke="none" />
  </svg>
);

const BatteryIcon: React.FC = () => (
  <svg width="53" height="24" viewBox="0 0 53 24" aria-hidden="true">
    <rect x="1" y="1" width="46" height="22" rx="6" fill="none" stroke="#6b6b6b" strokeWidth="2" />
    <rect x="4" y="4" width="40" height="16" rx="3" fill="#fff" />
    <path d="M50 8 Q53 10 53 12 Q53 14 50 16Z" fill="#6b6b6b" />
  </svg>
);

const ShareIcon: React.FC = () => (
  <svg width="60" height="36" viewBox="0 0 60 36" fill="none" stroke="#e8b520" strokeWidth="5" aria-hidden="true">
    <path d="M2.5 36 V26 Q2.5 22 7 22 H14" />
    <path d="M57.5 36 V26 Q57.5 22 53 22 H46" />
    <path d="M29 23 L16 6 M31 23 L43 6" />
    <path d="M10 0 L27 3 L11 16Z M49 0 L33 3 L48 16Z" fill="#e8b520" stroke="none" />
    <circle cx="30" cy="22" r="10" fill="#e8b520" stroke="none" />
  </svg>
);

const CircleChevronIcon: React.FC = () => (
  <svg width="31" height="31" viewBox="0 0 31 31" aria-hidden="true">
    <circle cx="15.5" cy="15.5" r="15.5" fill="#000" />
    <path d="M7 12.5 L15.5 20.5 L24 12.5" fill="none" stroke="#d6a800" strokeWidth="5" strokeLinecap="round" />
  </svg>
);

const ChatIcon: React.FC = () => (
  <svg width="70" height="58" viewBox="0 0 70 58" fill="#e9ab17" aria-hidden="true">
    <path d="M28 1 C43 1 56 9 56 21 C56 33 43 41 28 41 Q23 41 20 40 Q14 46 5 46 Q10 42 10 37 Q0 31 0 21 C0 9 13 1 28 1Z" />
    <path d="M60 15 C73 25 73 41 60 48 Q61 53 66 56 Q57 57 52 51 C43 53 32 52 26 46 C44 47 62 38 60 15Z" />
  </svg>
);

const HouseIcon: React.FC = () => (
  <svg width="62" height="60" viewBox="0 0 62 60" fill="#e9ab17" aria-hidden="true">
    <path d="M31 0 L37 6 V2 H48 V17 L62 31 V32 H53 V60 H37 V43 H26 V60 H9 V32 H0 V31Z" />
  </svg>
);

const MonitorIcon: React.FC = () => (
  <svg width="61" height="60" viewBox="0 0 61 60" fill="#e9ab17" aria-hidden="true">
    <path fillRule="evenodd" d="M3 0 H58 Q61 0 61 3 V46 Q61 49 58 49 H39 Q39 54 44 60 H17 Q22 54 22 49 H3 Q0 49 0 46 V3 Q0 0 3 0Z M4 3 Q3 3 3 4 V36 Q3 38 4 38 H57 Q58 38 58 36 V4 Q58 3 57 3Z" />
  </svg>
);

/* ------------------------------------------------------------------ */
/* Screen                                                              */
/* ------------------------------------------------------------------ */

const NAV_ITEMS = [
  { label: 'Contact', href: '#contact', icon: <ChatIcon /> },
  { label: 'Home', href: '#home', icon: <HouseIcon /> },
  { label: 'Website', href: '#website', icon: <MonitorIcon /> },
];

const StatusBar: React.FC = () => (
  <div className="flex h-12 items-center justify-between bg-black pr-8 pl-8 font-['Inter',sans-serif] text-[24px] text-white">
    <div className="flex gap-5">
      <span>5:07 PM</span>
      <span>Thu Mar 19</span>
    </div>
    <div className="flex items-center gap-1.5">
      <WifiIcon />
      <span>100%</span>
      <BatteryIcon />
    </div>
  </div>
);

const Header: React.FC = () => (
  <header className="relative z-10 grid h-[140px] grid-cols-3 bg-[#634415] font-bold text-white shadow-[0_6px_6px_0_#000]">
    <button type="button" className="mt-7 ml-5 flex flex-col items-center justify-self-start self-start">
      <span className="flex w-[72px] flex-col gap-4">
        <span className="h-1 bg-[#e9ab17]" />
        <span className="h-1 bg-[#e9ab17]" />
        <span className="h-1 bg-[#e9ab17]" />
      </span>
      <span className="mt-1.5 text-[33px] leading-[36px]">menu</span>
    </button>
    <h1 className="flex flex-col items-center pt-5 text-[31px] leading-[36px]">
      HEMPSTEAD COUNTY
      <span className="text-[52px] leading-[64px] tracking-[4px]">SHERIFF</span>
    </h1>
    <button type="button" className="mt-[42px] mr-5 flex flex-col items-center justify-self-end self-start text-[#e8b520]">
      <ShareIcon />
      <span className="text-[28px] leading-[32px]">SHARE</span>
    </button>

    {/* Social tab hangs below the bar */}
    <button type="button" className="absolute top-full left-1/2 flex h-[52px] w-[326px] -translate-x-1/2 justify-center text-black">
      <svg viewBox="0 0 326 52" className="absolute inset-0 drop-shadow-[0_4px_4px_#000]" aria-hidden="true">
        <path d="M0 0 H326 L300 40 Q290 52 270 52 H56 Q36 52 26 40Z" fill="#d6a800" />
      </svg>
      <span className="relative flex h-12 items-center gap-2 text-[37px]">
        Social
        <CircleChevronIcon />
      </span>
    </button>
  </header>
);

const ContactForm: React.FC = () => {
  const [email, setEmail] = useState('');
  const [message, setMessage] = useState('');

  return (
    <form className="mt-9 flex flex-col items-start text-[33px] leading-[40px]" onSubmit={(e) => e.preventDefault()}>
      <label htmlFor="email" className="font-bold">Email:</label>
      <input
        id="email"
        type="email"
        value={email}
        onChange={(e) => setEmail(e.target.value)}
        placeholder="Email Address is Optional"
        className="mt-3.5 h-[42px] w-full rounded-[10px] border-2 border-[#4c4c4c] bg-white text-[32px] text-black shadow-[inset_0_4px_4px_0_#c8c4c8] placeholder:text-[#a9a9a9]"
      />
      <label htmlFor="message" className="mt-4 font-bold">*Message:</label>
      <textarea
        id="message"
        value={message}
        onChange={(e) => setMessage(e.target.value)}
        className="mt-3.5 h-[279px] w-full resize-none rounded-[10px] border-2 border-[#4c4c4c] bg-white text-[32px] text-black shadow-[inset_0_4px_4px_0_#c8c4c8]"
      />
      <p className="mt-2">* Required field</p>
      <p className="mt-[30px]">
        By clicking submit, you are agreeing to our <a href="#disclaimer" className="underline">disclaimer.</a>
      </p>
      <button
        type="submit"
        className="mt-[35px] ml-1 h-[50px] rounded-[14px] border-2 border-[#4f4c45] bg-[#d6a80d] px-[10px] font-['Liberation_Sans',sans-serif] text-[22px] leading-[24px] font-bold text-black"
      >
        Submit
      </button>
    </form>
  );
};

const App: React.FC = () => (
  <div className="flex min-h-screen flex-col bg-[#333333] font-['Roboto_Condensed','Liberation_Sans_Narrow','Roboto',sans-serif] text-white">
    <StatusBar />
    <Header />

    <main className="mx-auto w-full max-w-[1452px] flex-1 pt-[86px]">
      <h2 className="text-[45px] leading-[50px] font-bold">Contact Us</h2>
      <div className="mt-[38px] text-[37px] leading-[44px]">
        <p className="text-[#d9a90f]">Emergency - <a href="tel:911" className="underline">911</a></p>
        <p>Phone: <a href="tel:8707776727" className="underline">870-777-6727</a> (24 Hours)</p>
        <p>Address:</p>
        <p>312 South Washington</p>
        <p>Hope, AR 71801</p>
        <p>Administrative Office Hours:</p>
        <p>Monday - Friday 8:00 am - 4:00 pm</p>
      </div>

      <ContactForm />

      <div className="relative mt-7">
        <AreaMap />
        <div className="absolute right-0 bottom-0 flex h-7 items-center gap-6 bg-[#f2f2ef]/80 px-3 font-['Roboto',sans-serif] text-[21px] text-[#444]">
          <a href="#map-data" className="underline">Map Data</a>
          <a href="#terms" className="underline">Terms of Use</a>
        </div>
      </div>
    </main>

    <nav className="flex h-[92px] items-center border-t-[6px] border-black bg-[#634415] text-[31px]">
      {NAV_ITEMS.map((item) => (
        <a
          key={item.label}
          href={item.href}
          className="flex h-[62px] flex-1 items-center justify-center gap-2 border-r-4 border-black last:border-r-0"
        >
          {item.icon}
          <span className="pb-2">{item.label}</span>
        </a>
      ))}
    </nav>
    <div className="flex h-10 items-center justify-center bg-white">
      <div className="h-[11px] w-[630px] rounded-full bg-black" />
    </div>
  </div>
);

export default App;
